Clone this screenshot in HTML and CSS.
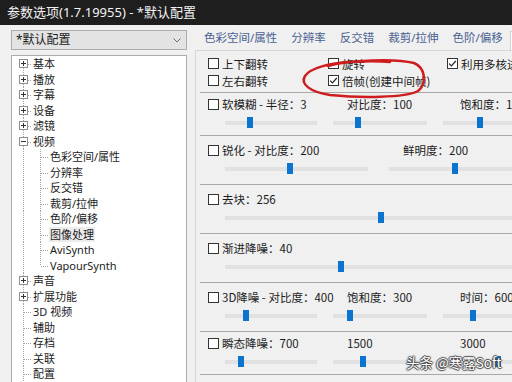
FILE: index.html
```html
<!DOCTYPE html>
<html lang="zh-CN">
<head>
<meta charset="utf-8">
<title>参数选项</title>
<link rel="stylesheet" href="styles.css">
</head>
<body>
<div class="window">
  <div class="titlebar">参数选项(1.7.19955) - *默认配置</div>
  <div class="client">
    <aside class="sidebar">
      <div class="combo"><span>*默认配置</span><svg class="chev" width="8" height="5" viewBox="0 0 8 5"><polyline points="0.5,0.5 4,4 7.5,0.5" fill="none" stroke="#6a6a6a" stroke-width="1"/></svg></div>
      <ul class="tree">
        <li class="node first"><svg class="exp" viewBox="0 0 9 9"><rect x=".5" y=".5" width="8" height="8" fill="#fff" stroke="#8e8f8f"/><path d="M2 4.5h5M4.5 2v5" stroke="#333"/></svg>基本</li>
        <li class="node"><svg class="exp" viewBox="0 0 9 9"><rect x=".5" y=".5" width="8" height="8" fill="#fff" stroke="#8e8f8f"/><path d="M2 4.5h5M4.5 2v5" stroke="#333"/></svg>播放</li>
        <li class="node"><svg class="exp" viewBox="0 0 9 9"><rect x=".5" y=".5" width="8" height="8" fill="#fff" stroke="#8e8f8f"/><path d="M2 4.5h5M4.5 2v5" stroke="#333"/></svg>字幕</li>
        <li class="node"><svg class="exp" viewBox="0 0 9 9"><rect x=".5" y=".5" width="8" height="8" fill="#fff" stroke="#8e8f8f"/><path d="M2 4.5h5M4.5 2v5" stroke="#333"/></svg>设备</li>
        <li class="node"><svg class="exp" viewBox="0 0 9 9"><rect x=".5" y=".5" width="8" height="8" fill="#fff" stroke="#8e8f8f"/><path d="M2 4.5h5M4.5 2v5" stroke="#333"/></svg>滤镜</li>
        <li class="node"><svg class="exp" viewBox="0 0 9 9"><rect x=".5" y=".5" width="8" height="8" fill="#fff" stroke="#8e8f8f"/><path d="M2 4.5h5" stroke="#333"/></svg>视频</li>
        <li class="node child">色彩空间/属性</li>
        <li class="node child">分辨率</li>
        <li class="node child">反交错</li>
        <li class="node child">裁剪/拉伸</li>
        <li class="node child">色阶/偏移</li>
        <li class="node child"><span class="sel">图像处理</span></li>
        <li class="node child">AviSynth</li>
        <li class="node child lastchild">VapourSynth</li>
        <li class="node"><svg class="exp" viewBox="0 0 9 9"><rect x=".5" y=".5" width="8" height="8" fill="#fff" stroke="#8e8f8f"/><path d="M2 4.5h5M4.5 2v5" stroke="#333"/></svg>声音</li>
        <li class="node"><svg class="exp" viewBox="0 0 9 9"><rect x=".5" y=".5" width="8" height="8" fill="#fff" stroke="#8e8f8f"/><path d="M2 4.5h5M4.5 2v5" stroke="#333"/></svg>扩展功能</li>
        <li class="node">3D 视频</li>
        <li class="node">辅助</li>
        <li class="node">存档</li>
        <li class="node">关联</li>
        <li class="node">配置</li>
      </ul>
    </aside>
    <main class="panel">
      <nav class="tabs">
        <span class="tab">色彩空间/属性</span>
        <span class="tab">分辨率</span>
        <span class="tab">反交错</span>
        <span class="tab">裁剪/拉伸</span>
        <span class="tab">色阶/偏移</span>
        <span class="tab active">图像处理</span>
      </nav>
      <div class="page">
        <section class="sec toggles">
          <label class="chk"><svg class="box" viewBox="0 0 11 11"><rect x=".5" y=".5" width="10" height="10" fill="#fff" stroke="#333"/></svg>上下翻转</label>
          <label class="chk"><svg class="box" viewBox="0 0 11 11"><rect x=".5" y=".5" width="10" height="10" fill="#fff" stroke="#333"/></svg>旋转</label>
          <label class="chk"><svg class="box" viewBox="0 0 11 11"><rect x=".5" y=".5" width="10" height="10" fill="#fff" stroke="#333"/><path d="M2.2 5.6 4.4 7.8 8.8 3" fill="none" stroke="#222" stroke-width="1.2"/></svg>利用多核进行处理</label>
          <label class="chk"><svg class="box" viewBox="0 0 11 11"><rect x=".5" y=".5" width="10" height="10" fill="#fff" stroke="#333"/></svg>左右翻转</label>
          <label class="chk"><svg class="box" viewBox="0 0 11 11"><rect x=".5" y=".5" width="10" height="10" fill="#fff" stroke="#333"/><path d="M2.2 5.6 4.4 7.8 8.8 3" fill="none" stroke="#222" stroke-width="1.2"/></svg>倍帧(创建中间帧)</label>
        </section>

        <section class="sec short">
          <div class="lbls">
            <label class="chk col-a"><svg class="box" viewBox="0 0 11 11"><rect x=".5" y=".5" width="10" height="10" fill="#fff" stroke="#333"/></svg>软模糊 - 半径：3</label>
            <span class="col-b">对比度：100</span>
            <span>饱和度：100</span>
          </div>
          <div class="sliders">
            <div class="trk t92"><i class="thumb" style="left:22px"></i></div>
            <div class="trk t94"><i class="thumb" style="left:22px"></i></div>
            <div class="trk t94"><i class="thumb" style="left:34px"></i></div>
          </div>
        </section>

        <section class="sec">
          <div class="lbls">
            <label class="chk col-wide"><svg class="box" viewBox="0 0 11 11"><rect x=".5" y=".5" width="10" height="10" fill="#fff" stroke="#333"/></svg>锐化 - 对比度：200</label>
            <span>鲜明度：200</span>
          </div>
          <div class="sliders wide-gap">
            <div class="trk t143"><i class="thumb" style="left:62px"></i></div>
            <div class="trk grow"><i class="thumb" style="left:63px"></i></div>
          </div>
        </section>

        <section class="sec">
          <div class="lbls">
            <label class="chk"><svg class="box" viewBox="0 0 11 11"><rect x=".5" y=".5" width="10" height="10" fill="#fff" stroke="#333"/></svg>去块：256</label>
          </div>
          <div class="sliders">
            <div class="trk grow"><i class="thumb" style="left:153px"></i></div>
          </div>
        </section>

        <section class="sec">
          <div class="lbls">
            <label class="chk"><svg class="box" viewBox="0 0 11 11"><rect x=".5" y=".5" width="10" height="10" fill="#fff" stroke="#333"/></svg>渐进降噪：40</label>
          </div>
          <div class="sliders">
            <div class="trk grow"><i class="thumb" style="left:113px"></i></div>
          </div>
        </section>

        <section class="sec">
          <div class="lbls">
            <label class="chk col-a"><svg class="box" viewBox="0 0 11 11"><rect x=".5" y=".5" width="10" height="10" fill="#fff" stroke="#333"/></svg>3D降噪 - 对比度：400</label>
            <span class="col-b">饱和度：300</span>
            <span>时间：600</span>
          </div>
          <div class="sliders">
            <div class="trk t92"><i class="thumb" style="left:18px"></i></div>
            <div class="trk t94"><i class="thumb" style="left:14px"></i></div>
            <div class="trk t94"><i class="thumb" style="left:27px"></i></div>
          </div>
        </section>

        <section class="sec short">
          <div class="lbls">
            <label class="chk col-a"><svg class="box" viewBox="0 0 11 11"><rect x=".5" y=".5" width="10" height="10" fill="#fff" stroke="#333"/></svg>瞬态降噪：700</label>
            <span class="col-b">1500</span>
            <span>3000</span>
          </div>
          <div class="sliders">
            <div class="trk t92"><i class="thumb" style="left:13px"></i></div>
            <div class="trk t94"><i class="thumb" style="left:27px"></i></div>
            <div class="trk t94"><i class="thumb" style="left:52px"></i></div>
          </div>
        </section>

        <section class="sec">
          <div class="lbls">
            <label class="chk col-wide"><svg class="box" viewBox="0 0 11 11"><rect x=".5" y=".5" width="10" height="10" fill="#fff" stroke="#333"/></svg>时域降噪 - 强度：300</label>
            <span>阈值：100</span>
          </div>
        </section>
      </div>
    </main>
  </div>
  <svg class="annot" width="512" height="382" viewBox="0 0 512 382">
    <path d="M328 66 C 350 60, 395 58, 414 63 C 426 68, 427 84, 418 91 C 405 98, 360 98, 330 95 C 310 92, 300 84, 305 76 C 310 68, 330 63, 350 62 C 365 61, 380 61, 390 62" fill="none" stroke="#cf1d1f" stroke-width="2.5" stroke-linecap="round"/>
  </svg>
  <div class="watermark">头条 @寒露Soft</div>
</div>
</body>
</html>
```

FILE: styles.css
```css
* {
  box-sizing: border-box;
  margin: 0;
  padding: 0;
}

body {
  margin: 0;
  background: #f0f0f0;
  font-family: "Noto Sans", "Noto Sans CJK SC", sans-serif;
  color: #1c1c1c;
}

.window {
  position: relative;
  width: 512px;
  height: 382px;
  overflow: hidden;
  background: #f0f0f0;
}

.titlebar {
  height: 25px;
  background: #1e1e1e;
  color: #f2f2f2;
  font-size: 13px;
  line-height: 25px;
  padding-left: 7px;
  white-space: nowrap;
}

.client {
  display: flex;
  height: 357px;
}

/* ---------- left side ---------- */
.sidebar {
  width: 195px;
  flex: none;
  padding: 5px 0 0 11px;
}

.combo {
  width: 176px;
  height: 20px;
  background: #e3e3e3;
  border: 1px solid #adadad;
  display: flex;
  align-items: center;
  justify-content: space-between;
  padding: 0 5px 0 4px;
  font-size: 12px;
  line-height: 18px;
}

.chev {
  display: block;
}

.tree {
  list-style: none;
  margin-top: 5px;
  width: 176px;
  height: 420px;
  background: #fff;
  border: 1px solid #aaacb0;
  font-size: 11px;
}

.node {
  position: relative;
  height: 15.5px;
  line-height: 15.5px;
  padding-left: 21px;
  white-space: nowrap;
}

.node::before {
  content: "";
  position: absolute;
  left: 11px;
  top: 0;
  bottom: 0;
  width: 1px;
  background: repeating-linear-gradient(to bottom, #a3a3a3 0 1px, transparent 1px 2px);
}

.node::after {
  content: "";
  position: absolute;
  left: 12px;
  top: 8px;
  width: 7px;
  height: 1px;
  background: repeating-linear-gradient(to right, #a3a3a3 0 1px, transparent 1px 2px);
}

.node.first::before {
  top: 8px;
}

.exp {
  position: absolute;
  z-index: 1;
  left: 7px;
  top: 3px;
  width: 9px;
  height: 9px;
}

.node.child {
  padding-left: 38px;
  background-image: repeating-linear-gradient(to bottom, #a3a3a3 0 1px, transparent 1px 2px);
  background-size: 1px 100%;
  background-position: 11px 0;
  background-repeat: no-repeat;
}

.node.child::before {
  left: 28px;
}

.node.child::after {
  left: 29px;
}

.node.lastchild::before {
  bottom: auto;
  height: 8px;
}

.sel {
  background: #ececec;
  padding: 0 1px;
  margin-left: -1px;
}

/* ---------- right side ---------- */
.panel {
  flex: 1;
  min-width: 0;
  overflow: hidden;
}

.tabs {
  display: flex;
  height: 25px;
  padding-left: 2px;
  font-size: 11.5px;
  color: #4a6190;
  white-space: nowrap;
}

.tab {
  padding: 0 7px;
  line-height: 25px;
  flex: none;
}

.tab.active {
  margin-top: 6px;
  line-height: 18px;
  background: #fbfbfb;
  border: 1px solid #d4d4d4;
  border-bottom: none;
  color: #1c1c1c;
}

.page {
  width: 420px;
  border-top: 1px solid #d6d6d6;
  border-left: 1px solid #d6d6d6;
  font-family: "Noto Sans CJK SC", sans-serif;
  font-size: 11.5px;
}

.sec {
  margin-left: 4px;
  height: 49px;
  padding: 6px 0 4px;
  border-bottom: 1px solid #a9a9a9;
}

.sec.short {
  height: 43px;
  padding: 3px 0 1px;
}

.sec.toggles {
  height: 42px;
  padding: 4px 0 0 8px;
  display: grid;
  grid-template-columns: 120px 119px auto;
  grid-auto-rows: 17px;
  align-items: center;
}

.lbls {
  display: flex;
  align-items: center;
  height: 16px;
  padding-left: 8px;
  white-space: nowrap;
}

.chk {
  display: flex;
  align-items: center;
  gap: 3px;
  white-space: nowrap;
}

.box {
  width: 11px;
  height: 11px;
  flex: none;
}

.col-a {
  width: 139px;
  flex: none;
}

.col-b {
  width: 113px;
  flex: none;
}

.col-wide {
  width: 195px;
  flex: none;
}

.sliders {
  display: flex;
  align-items: center;
  gap: 16px;
  height: 22px;
  padding-left: 25px;
}

.sliders.wide-gap {
  gap: 21px;
}

.trk {
  position: relative;
  height: 4px;
  background: #e1e1e1;
  flex: none;
}

.t92 { width: 92px; }
.t94 { width: 94px; }
.t143 { width: 143px; }
.trk.grow { flex: 1; }

.thumb {
  position: absolute;
  top: -4px;
  width: 6px;
  height: 11px;
  background: #0a74d0;
}

/* ---------- overlays ---------- */
.annot {
  position: absolute;
  left: 0;
  top: 0;
  pointer-events: none;
}

.watermark {
  position: absolute;
  left: 406px;
  top: 353px;
  font-family: "Noto Sans CJK SC", sans-serif;
  font-size: 13.5px;
  line-height: 18px;
  color: #fff;
  white-space: nowrap;
  text-shadow: 1px 0 1px #444, -1px 0 1px #444, 0 1px 1px #444, 0 -1px 1px #444;
}
```
